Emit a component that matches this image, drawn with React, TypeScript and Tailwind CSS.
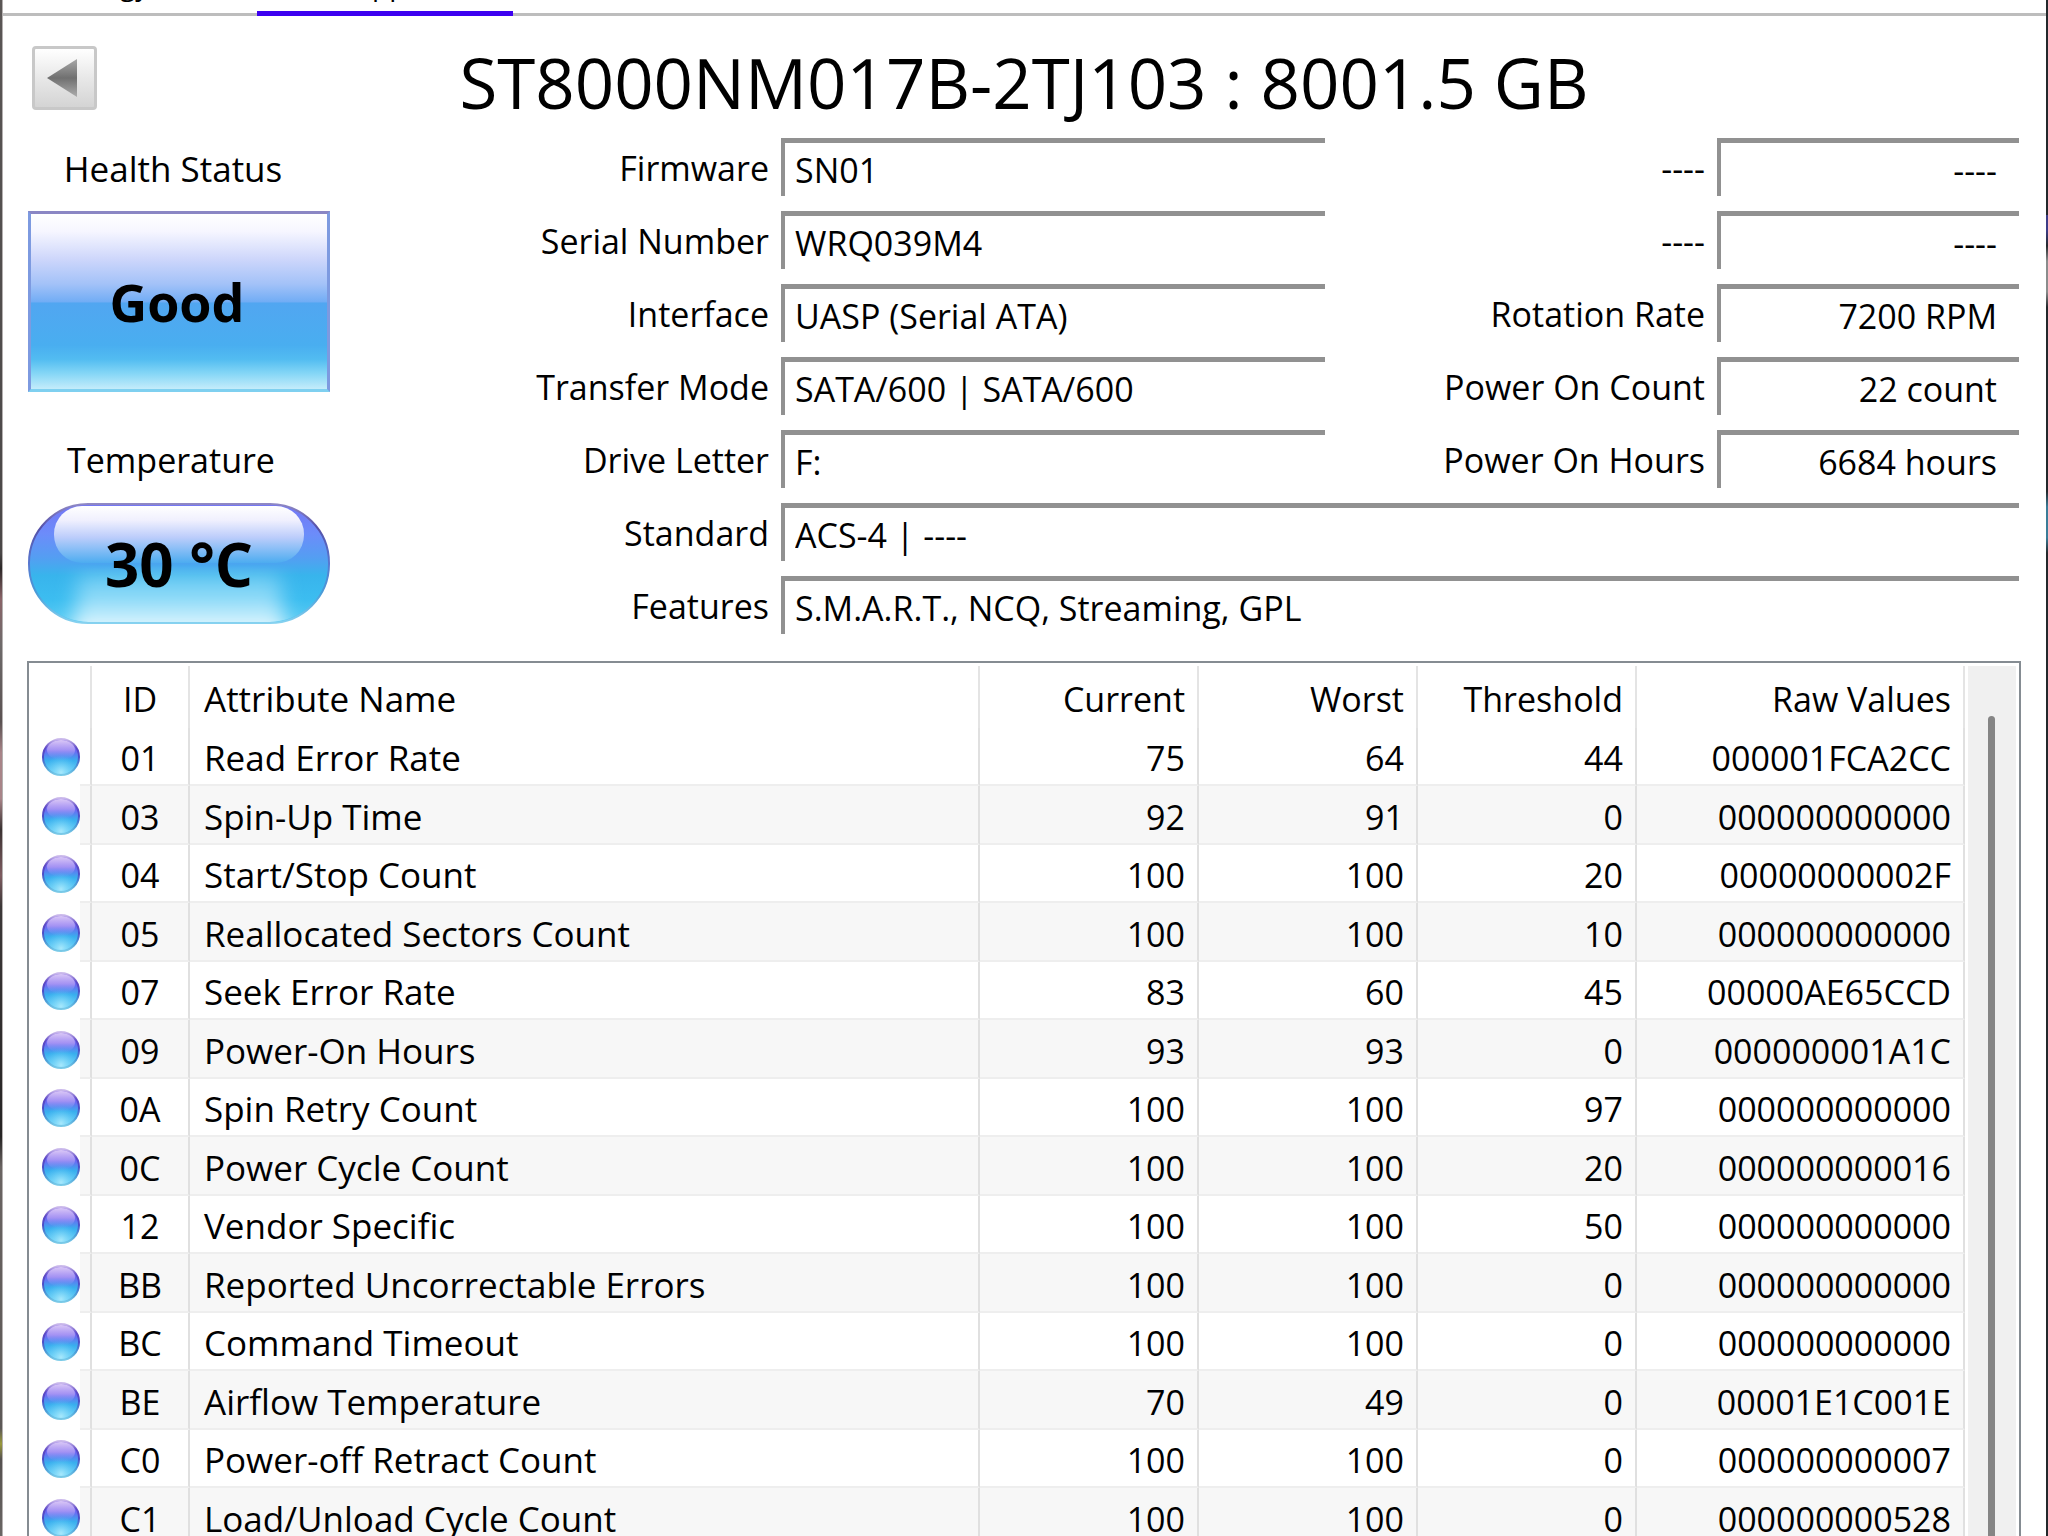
import React from "react";

const fields = [
  { id: "firmware", label: "Firmware", value: "SN01" },
  { id: "serial", label: "Serial Number", value: "WRQ039M4" },
  { id: "interface", label: "Interface", value: "UASP (Serial ATA)" },
  { id: "transfer", label: "Transfer Mode", value: "SATA/600 | SATA/600" },
  { id: "letter", label: "Drive Letter", value: "F:" },
];

const wideFields = [
  { id: "standard", label: "Standard", value: "ACS-4 | ----" },
  { id: "features", label: "Features", value: "S.M.A.R.T., NCQ, Streaming, GPL" },
];

const stats = [
  { id: "stat-1", label: "----", value: "----" },
  { id: "stat-2", label: "----", value: "----" },
  { id: "rotation", label: "Rotation Rate", value: "7200 RPM" },
  { id: "count", label: "Power On Count", value: "22 count" },
  { id: "hours", label: "Power On Hours", value: "6684 hours" },
];

const attributes = [
  ["01", "Read Error Rate", "75", "64", "44", "000001FCA2CC"],
  ["03", "Spin-Up Time", "92", "91", "0", "000000000000"],
  ["04", "Start/Stop Count", "100", "100", "20", "00000000002F"],
  ["05", "Reallocated Sectors Count", "100", "100", "10", "000000000000"],
  ["07", "Seek Error Rate", "83", "60", "45", "00000AE65CCD"],
  ["09", "Power-On Hours", "93", "93", "0", "000000001A1C"],
  ["0A", "Spin Retry Count", "100", "100", "97", "000000000000"],
  ["0C", "Power Cycle Count", "100", "100", "20", "000000000016"],
  ["12", "Vendor Specific", "100", "100", "50", "000000000000"],
  ["BB", "Reported Uncorrectable Errors", "100", "100", "0", "000000000000"],
  ["BC", "Command Timeout", "100", "100", "0", "000000000000"],
  ["BE", "Airflow Temperature", "70", "49", "0", "00001E1C001E"],
  ["C0", "Power-off Retract Count", "100", "100", "0", "000000000007"],
  ["C1", "Load/Unload Cycle Count", "100", "100", "0", "000000000528"],
];

type FieldProps = {
  id: string;
  label: string;
  value: string;
  right?: boolean;
};

const Field = ({ id, label, value, right }: FieldProps) => (
  <div className="flex h-[58px] w-full">
    <label
      htmlFor={id}
      className={
        right
          ? "flex-1 pr-3 pt-1 text-right leading-[52px] whitespace-nowrap"
          : "w-[253px] shrink-0 pr-3 pt-1 text-right leading-[52px] whitespace-nowrap"
      }
    >
      {label}
    </label>
    <input
      id={id}
      readOnly
      value={value}
      className={
        right
          ? "w-[302px] border-l-4 border-t-[5px] border-[#919191] bg-transparent pr-[22px] pt-[2px] text-right outline-none"
          : "min-w-0 flex-1 border-l-4 border-t-[5px] border-[#919191] bg-transparent pl-[10px] pt-[2px] outline-none"
      }
    />
  </div>
);

const StatusDot = () => (
  <svg viewBox="0 0 38 38" className="ml-[10px] h-[38px] w-[38px]">
    <defs>
      <linearGradient id="dotBody" x1="0" y1="0" x2="0" y2="1">
        <stop offset="0" stopColor="#8a6cee" />
        <stop offset="0.35" stopColor="#6a6cf2" />
        <stop offset="0.6" stopColor="#38aeee" />
        <stop offset="1" stopColor="#6fd4f8" />
      </linearGradient>
      <linearGradient id="dotRim" x1="0" y1="0" x2="0" y2="1">
        <stop offset="0" stopColor="#cdbcec" />
        <stop offset="0.25" stopColor="#5e48c4" />
        <stop offset="0.5" stopColor="#4a4cc8" />
        <stop offset="0.8" stopColor="#4ea2d8" />
        <stop offset="1" stopColor="#7ccbe8" />
      </linearGradient>
      <linearGradient id="dotShine" x1="0" y1="0" x2="0" y2="1">
        <stop offset="0" stopColor="#dac8f6" />
        <stop offset="0.5" stopColor="#b19cf4" stopOpacity="0.8" />
        <stop offset="1" stopColor="#62a0f6" stopOpacity="0" />
      </linearGradient>
      <radialGradient id="dotGlow" cx="0.5" cy="0.95" r="0.5">
        <stop offset="0" stopColor="#a8e8fc" />
        <stop offset="1" stopColor="#5fcdf6" stopOpacity="0" />
      </radialGradient>
    </defs>
    <circle cx="19" cy="19" r="18" fill="url(#dotBody)" stroke="url(#dotRim)" strokeWidth="2" />
    <circle cx="19" cy="19" r="17" fill="url(#dotGlow)" />
    <ellipse cx="19" cy="12" rx="14" ry="10" fill="url(#dotShine)" />
  </svg>
);

const TemperaturePill = () => (
  <svg viewBox="0 0 302 121" className="absolute inset-0 h-full w-full">
    <defs>
      <linearGradient id="pillBody" x1="0" y1="0" x2="0" y2="1">
        <stop offset="0" stopColor="#7476f4" />
        <stop offset="0.25" stopColor="#6c8cfa" />
        <stop offset="0.45" stopColor="#549ef2" />
        <stop offset="0.6" stopColor="#38b4ec" />
        <stop offset="0.8" stopColor="#3cbdf0" />
        <stop offset="1" stopColor="#5ccdf4" />
      </linearGradient>
      <linearGradient id="pillRim" x1="0" y1="0" x2="0" y2="1">
        <stop offset="0" stopColor="#8f88c4" />
        <stop offset="0.2" stopColor="#5450a8" />
        <stop offset="0.5" stopColor="#5878d0" />
        <stop offset="0.75" stopColor="#4a9cd8" />
        <stop offset="1" stopColor="#86d2f0" />
      </linearGradient>
      <linearGradient id="pillShine" x1="0" y1="0" x2="0" y2="1">
        <stop offset="0" stopColor="#ffffff" />
        <stop offset="0.25" stopColor="#f0f0fe" />
        <stop offset="0.55" stopColor="#bccdfb" />
        <stop offset="1" stopColor="#4cacf0" />
      </linearGradient>
      <linearGradient id="pillGlow" x1="0" y1="0" x2="0" y2="1">
        <stop offset="0" stopColor="#c8effd" stopOpacity="0" />
        <stop offset="0.5" stopColor="#a4e2fa" stopOpacity="0.75" />
        <stop offset="0.9" stopColor="#cdf0fd" />
      </linearGradient>
      <filter id="pillSoft" x="-20%" y="-20%" width="140%" height="140%">
        <feGaussianBlur stdDeviation="10 1" />
      </filter>
      <clipPath id="pillClip">
        <rect x="2" y="2" width="298" height="117" rx="59" />
      </clipPath>
    </defs>
    <rect x="1" y="1" width="300" height="119" rx="59" fill="url(#pillBody)" />
    <g clipPath="url(#pillClip)">
      <path
        d="M50 62 H252 C252 85 254 105 258 124 H44 C48 105 50 85 50 62 Z"
        fill="url(#pillGlow)"
        filter="url(#pillSoft)"
      />
    </g>
    <rect x="26" y="3" width="250" height="57" rx="28" fill="url(#pillShine)" />
    <rect x="1" y="1" width="300" height="119" rx="59" fill="none" stroke="url(#pillRim)" strokeWidth="2" />
  </svg>
);

const headCell = "h-[62px] border-r-2 border-[#e4e4e4] p-0 pt-1 font-normal";
const bodyCell =
  "border-b-2 border-r-2 border-b-[#eeeeee] border-r-[#e0e0e0] p-0 pt-1 group-even:bg-[#f7f7f7]";

const App = () => {
  return (
    <div className="flex h-screen overflow-hidden bg-white font-['Open_Sans','Noto_Sans',sans-serif] text-[34px] text-black">
      {/* Desktop showing past the window edge */}
      <div className="w-[3px] shrink-0 border-r border-[#b4b0b0] bg-[linear-gradient(to_bottom,#5a5655_0%,#4a4747_36%,#2c2828_37%,#8a6468_39%,#6e6a6a_42%,#5a5252_47%,#a88488_49%,#a88488_52%,#3a3232_54%,#7e5c60_57%,#3c3838_59%,#262424_74%,#6a6462_76%,#5c5856_93%,#9a9a3c_94%,#55514f_95%,#6a6664_100%)]" />

      <div className="flex min-w-0 flex-1 flex-col">
        {/* Tab strip, scrolled so only the bottom shows */}
        <nav className="flex h-4 shrink-0 overflow-hidden text-[28px] leading-4">
          <button className="flex h-4 w-[254px] items-start border-b-[3px] border-[#bdbdbd] pl-[117px]">
            <span className="-mt-6">gy</span>
          </button>
          <button className="flex h-4 w-[256px] items-start border-b-[5px] border-[#3c00f0] pl-[115px]">
            <span className="-mt-6">pp</span>
          </button>
          <div className="h-4 flex-1 border-b-[3px] border-[#bdbdbd]" />
        </nav>

        <header className="flex items-start px-[29px] pt-[30px]">
          <button
            aria-label="Previous disk"
            className="flex h-16 w-[65px] items-center justify-center rounded-sm border-[3px] border-[#c8c8c8] bg-linear-to-b from-white via-[#e8e8e8] to-[#d4d4d4] pr-1"
          >
            <svg viewBox="0 0 32 38" className="h-[38px] w-8">
              <defs>
                <linearGradient id="arrow" x1="0" y1="0" x2="0" y2="1">
                  <stop offset="0" stopColor="#a8a8a8" />
                  <stop offset="0.5" stopColor="#707070" />
                  <stop offset="1" stopColor="#acacac" />
                </linearGradient>
              </defs>
              <path d="M0 19 L30 0 V38 Z" fill="url(#arrow)" />
            </svg>
          </button>
          <h1 className="h-[92px] flex-1 pr-[66px] text-center text-[69px] leading-[72px]">
            ST8000NM017B-2TJ103 : 8001.5 GB
          </h1>
        </header>

        <section className="flex pl-[25px] pr-[27px]">
          <div className="flex w-[302px] shrink-0 flex-col">
            <p className="h-[73px] pr-3 text-center text-[35px] leading-[62px]">Health Status</p>
            <button className="h-[181px] border-[3px] border-b-[#7fd0f0] border-l-[#7d9ae0] border-r-[#7d9ae0] border-t-[#8a86c4] bg-[linear-gradient(to_bottom,#ffffff_0%,#f6f6ff_10%,#cdd6fb_26%,#a3c2f8_40%,#72adf5_50%,#51a6f1_51%,#49aef0_75%,#52bcf1_83%,#84d6f6_91%,#c4ecfb_100%)] pr-1 text-[52px] font-bold">
              Good
            </button>
            <p className="h-[111px] pr-4 pt-9 text-center leading-[64px]">Temperature</p>
            <button className="relative h-[121px] text-[60px] font-bold">
              <TemperaturePill />
              <span className="relative">30 °C</span>
            </button>
          </div>

          <div className="ml-[198px] flex flex-1 flex-col gap-[15px]">
            <div className="flex">
              <div className="flex w-[797px] flex-col gap-[15px]">
                {fields.map((f) => (
                  <Field key={f.id} {...f} />
                ))}
              </div>
              <div className="flex flex-1 flex-col gap-[15px]">
                {stats.map((f) => (
                  <Field key={f.id} {...f} right />
                ))}
              </div>
            </div>
            {wideFields.map((f) => (
              <Field key={f.id} {...f} />
            ))}
          </div>
        </section>

        <section className="ml-6 mr-[25px] mt-[27px] flex min-h-0 flex-1 items-stretch border-x-2 border-t-2 border-[#858c92] pl-[3px] pr-[3px] pt-[3px]">
          <div className="min-w-0 flex-1 overflow-hidden">
            <table className="w-full table-fixed border-separate border-spacing-0">
              <colgroup>
                <col className="w-12" />
                <col className="w-3" />
                <col className="w-[98px]" />
                <col />
                <col className="w-[219px]" />
                <col className="w-[219px]" />
                <col className="w-[219px]" />
                <col className="w-[328px]" />
              </colgroup>
              <thead>
                <tr>
                  <th className="p-0" />
                  <th className={headCell} />
                  <th className={headCell}>ID</th>
                  <th className={`${headCell} pl-[14px] text-left text-[35px]`}>Attribute Name</th>
                  <th className={`${headCell} pr-3 text-right`}>Current</th>
                  <th className={`${headCell} pr-3 text-right`}>Worst</th>
                  <th className={`${headCell} pr-3 text-right`}>Threshold</th>
                  <th className={`${headCell} pr-3 text-right`}>Raw Values</th>
                </tr>
              </thead>
              <tbody>
                {attributes.map(([id, name, current, worst, threshold, raw]) => (
                  <tr key={id} className="group h-[58px] leading-[50px] even:h-[59px]">
                    <td className="p-0">
                      <StatusDot />
                    </td>
                    <td className={bodyCell} />
                    <td className={`${bodyCell} text-center`}>{id}</td>
                    <td className={`${bodyCell} pl-[14px] text-[35px]`}>{name}</td>
                    <td className={`${bodyCell} pr-3 text-right`}>{current}</td>
                    <td className={`${bodyCell} pr-3 text-right`}>{worst}</td>
                    <td className={`${bodyCell} pr-3 text-right`}>{threshold}</td>
                    <td className={`${bodyCell} pr-3 text-right`}>{raw}</td>
                  </tr>
                ))}
              </tbody>
            </table>
          </div>
          <div className="ml-[3px] flex w-12 justify-center bg-[#f0f0f0] pr-[2px] pt-[50px]">
            <div className="w-[7px] rounded-t-full bg-[#858585]" />
          </div>
        </section>
      </div>

      <div className="w-[2px] shrink-0 bg-[linear-gradient(to_bottom,#23282b_0%,#23282b_14%,#3c3c86_14%,#3c3c86_15%,#23282b_16%,#8a8c8c_17%,#8a8c8c_19%,#23282b_20%,#23282b_32%,#3a7c98_33%,#3a7c98_35%,#23282b_36%,#23282b_100%)]" />
    </div>
  );
};

export default App;
